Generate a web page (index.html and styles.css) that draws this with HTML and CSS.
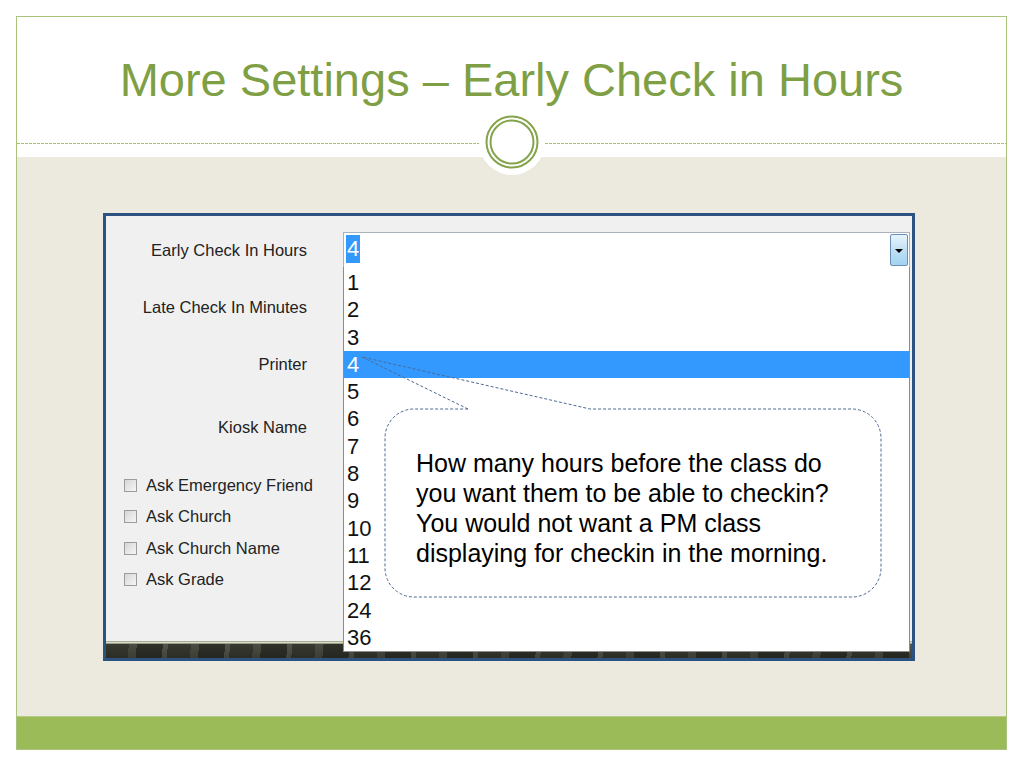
FILE: index.html
```html
<!DOCTYPE html>
<html lang="en">
<head>
    <meta charset="UTF-8">
    <title>More Settings – Early Check in Hours</title>
    <link rel="stylesheet" href="styles.css">
</head>
<body>
    <div class="slide">
        <header class="slide-head">
            <h1 class="title">More Settings – Early Check in Hours</h1>
            <div class="rule">
                <svg class="ring" width="66" height="66" viewBox="0 0 66 66">
                    <circle cx="33" cy="33" r="33" fill="#fff"/>
                    <circle cx="33" cy="33" r="25.5" fill="none" stroke="#84a34a" stroke-width="2"/>
                    <circle cx="33" cy="33" r="21.5" fill="none" stroke="#84a34a" stroke-width="2"/>
                </svg>
            </div>
        </header>

        <main class="slide-body">
            <div class="window">
                <div class="window-main">
                    <div class="form">
                        <div class="field">Early Check In Hours</div>
                        <div class="field">Late Check In Minutes</div>
                        <div class="field">Printer</div>
                        <div class="field field-wide">Kiosk Name</div>

                        <div class="checks">
                            <label class="check"><span class="box"></span>Ask Emergency Friend</label>
                            <label class="check"><span class="box"></span>Ask Church</label>
                            <label class="check"><span class="box"></span>Ask Church Name</label>
                            <label class="check"><span class="box"></span>Ask Grade</label>
                        </div>
                    </div>

                    <div class="picker">
                        <div class="combo">
                            <span class="combo-value">4</span>
                            <span class="combo-btn"></span>
                            <ul class="options">
                                <li>1</li>
                                <li>2</li>
                                <li>3</li>
                                <li class="selected">4</li>
                                <li>5</li>
                                <li>6</li>
                                <li>7</li>
                                <li>8</li>
                                <li>9</li>
                                <li>10</li>
                                <li>11</li>
                                <li>12</li>
                                <li>24</li>
                                <li>36</li>
                            </ul>
                        </div>
                    </div>
                </div>
                <div class="taskbar"></div>

                <!-- speech bubble pointing at the selected option -->
                <svg class="callout" width="530" height="252" viewBox="0 0 530 252">
                    <path d="M113 59 L7 7 L235 59 L497 59 A29 29 0 0 1 526 88 L526 218 A29 29 0 0 1 497 247 L59 247 A29 29 0 0 1 30 218 L30 88 A29 29 0 0 1 59 59 Z"
                          fill="none" stroke="#4d6a93" stroke-width="1" stroke-dasharray="3 2"/>
                </svg>
                <p class="callout-text">How many hours before the class do<br>you want them to be able to checkin?<br>You would not want a PM class<br>displaying for checkin in the morning.</p>
            </div>
        </main>

        <footer class="slide-foot"></footer>
    </div>
</body>
</html>
```

FILE: styles.css
```css
body {
    margin: 0;
    background: #fff;
    font-family: "Liberation Sans", Arial, sans-serif;
}

.slide {
    width: 991px;
    height: 734px;
    margin: 16px 0 0 16px;
    border: 1px solid #a9c37f;
    box-sizing: border-box;
    display: flex;
    flex-direction: column;
}

/* header with title and ring divider */
.slide-head {
    height: 140px;
    background: #fff;
    padding-top: 35px;
    box-sizing: border-box;
}

.title {
    margin: 0;
    height: 56px;
    font-size: 47px;
    line-height: 56px;
    font-weight: normal;
    text-align: center;
    color: #7f9f45;
}

.rule {
    position: relative;
    margin-top: 35px;
    height: 1px;
    background: repeating-linear-gradient(to right, #a6bf78 0 3px, transparent 3px 4px);
}

.ring {
    position: absolute;
    left: 462px;
    top: -34px;
}

/* content area */
.slide-body {
    flex: 1;
    background: #eceadf;
    padding: 56px 0 0 86px;
}

.slide-foot {
    height: 33px;
    background: #9bbb59;
    border-top: 1px solid #b3cb85;
    box-sizing: border-box;
}

/* the captured dialog */
.window {
    position: relative;
    width: 812px;
    height: 448px;
    border: 3px solid #2c5282;
    box-sizing: border-box;
    background: #f0f0f0;
    display: flex;
    flex-direction: column;
}

.window-main {
    flex: 1;
    display: flex;
}

.form {
    width: 237px;
    padding-top: 16px;
    box-sizing: border-box;
    font-size: 16.5px;
    color: #222;
}

.field {
    height: 36px;
    padding-right: 36px;
    display: flex;
    align-items: center;
    justify-content: flex-end;
    margin-bottom: 21px;
}

.field-wide {
    margin-top: 27px;
    margin-bottom: 0;
}

.checks {
    margin-top: 30px;
    display: flex;
    flex-direction: column;
    gap: 11.6px;
}

.check {
    height: 20px;
    padding-left: 18px;
    display: flex;
    align-items: center;
    gap: 9px;
}

.box {
    width: 13px;
    height: 13px;
    border: 1px solid #9c9c9c;
    box-sizing: border-box;
    background: linear-gradient(135deg, #d6d6d6, #f6f6f6);
}

.picker {
    flex: 1;
    padding: 16px 2px 0 0;
}

.combo {
    position: relative;
    height: 36px;
    border: 1px solid #a9b2bd;
    box-sizing: border-box;
    background: #fff;
    display: flex;
    justify-content: space-between;
    padding: 1px;
}

.combo-value {
    margin: 1px 0 0 1px;
    width: 14px;
    height: 28px;
    font-size: 22px;
    line-height: 28px;
    color: #fff;
    background: #3399ff;
    text-align: center;
}

.combo-btn {
    position: relative;
    width: 16px;
    border: 1px solid #6b8fb3;
    border-radius: 2px;
    background: linear-gradient(to bottom, #e8f4fc, #bfe0f6 50%, #a3d2f1);
}

.combo-btn::after {
    content: "";
    position: absolute;
    left: 4px;
    top: 14px;
    border-left: 4px solid transparent;
    border-right: 4px solid transparent;
    border-top: 4px solid #000;
}

.options {
    position: absolute;
    top: 100%;
    left: -1px;
    right: -1px;
    height: 385px;
    margin: 0;
    padding: 2px 0 0;
    list-style: none;
    background: #fff;
    border: 1px solid #8c8c8c;
    border-top: none;
    box-sizing: border-box;
    font-size: 22px;
    color: #111;
}

.options li {
    height: 27.3px;
    line-height: 27.3px;
    padding-left: 3px;
}

.options .selected {
    background: #3399ff;
    color: #fff;
}

.taskbar {
    height: 17px;
    background:
        linear-gradient(to bottom, #8f947c, #d9dbc6 50%, #7b806a) top / 100% 3px no-repeat,
        linear-gradient(to bottom, rgba(0, 0, 0, 0.15), rgba(0, 0, 0, 0.35)),
        repeating-linear-gradient(95deg, #44453a 0 23px, #5c5d50 23px 31px, #3a3b32 31px 57px, #66675a 57px 62px);
}

.callout {
    position: absolute;
    left: 249px;
    top: 134px;
}

.callout-text {
    position: absolute;
    left: 310px;
    top: 232px;
    margin: 0;
    font-size: 25px;
    line-height: 30px;
    color: #000;
    white-space: nowrap;
}
```
